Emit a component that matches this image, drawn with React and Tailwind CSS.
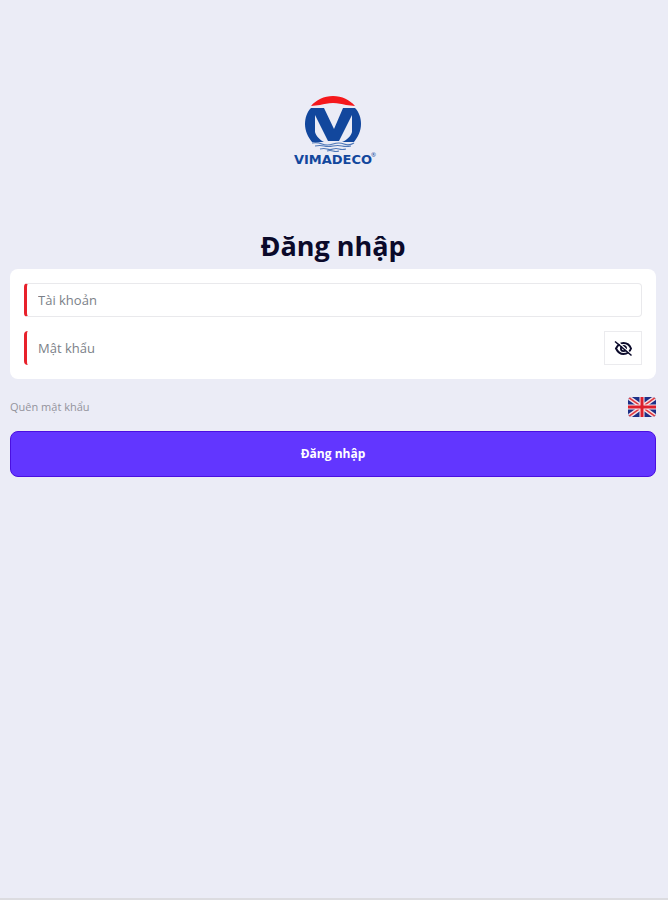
import React, { useState } from 'react';

function Logo() {
  return (
    <div className="relative flex flex-col items-center">
      <svg className="w-14 h-14" viewBox="0 0 56 56" aria-hidden="true">
        <path d="M6 10C11 4 19 0 28 0s17 4 22 10l-9-1C37 8 33 7 28 7s-9 1-13 2z" fill="#f5181c" />
        <path
          d="M6 12h13l10 21 9-21h12c4 4 6 10 6 16 0 7-3 13-7 18H37c5-2 9-6 10-10V19L34 45H23L10 19v17c1 4 5 8 9 10H7C3 41 0 35 0 28c0-6 2-12 6-16z"
          fill="#12479d"
        />
        <g fill="none" stroke="#4f78b8" strokeWidth="1.2">
          <path d="M7 47q5-1 10 1t11 0 11 0 10-1" />
          <path d="M10 50q5-1 9 0t9 0 9 0 9 0" />
          <path d="M15 53q4-1 7 0t6 0 6 0 7 0" />
          <path d="M22 55q3-1 6 0t6 0" />
        </g>
      </svg>
      <span className="mt-0.5 text-[13px] leading-3 font-bold text-[#12479d] font-['DejaVu_Sans',sans-serif]">VIMADECO</span>
      <span className="absolute -right-1 bottom-2 text-[6px] leading-none text-[#12479d]">®</span>
    </div>
  );
}

function EyeOff() {
  return (
    <svg className="w-5 h-5" viewBox="0 0 20 20" fill="none" stroke="#0b0a2a" aria-hidden="true">
      <path d="M3 10.500c2-4 4-5.500 7.500-5.500s6 1.500 7.500 5.500c-1.500 4-4 5.500-7.500 5.500S5 14.500 3 10.500z" strokeWidth="2" />
      <circle cx="10.500" cy="10.500" r="2.600" strokeWidth="1.800" />
      <path d="M3.500 2.500l15 14" stroke="#fff" strokeWidth="1.500" />
      <path d="M2 3.500l16.500 14" strokeWidth="1.600" />
    </svg>
  );
}

function UkFlag() {
  return (
    <svg className="w-7 h-5 rounded-sm" viewBox="0 0 28 20" aria-hidden="true">
      <rect width="28" height="20" fill="#1c2f86" />
      <path d="M0 0l28 20M28 0L0 20" stroke="#f3dfe6" strokeWidth="4.500" />
      <path d="M0 0l28 20M28 0L0 20" stroke="#e0393f" strokeWidth="1.500" />
      <path d="M14 0v20M0 10h28" stroke="#f6e6ea" strokeWidth="5" />
      <path d="M14 0v20M0 10h28" stroke="#dc1f2c" strokeWidth="3" />
    </svg>
  );
}

export default function App() {
  const [account, setAccount] = useState('');
  const [password, setPassword] = useState('');
  const [visible, setVisible] = useState(false);

  return (
    <main className="min-h-screen bg-[#ebecf6] border-b-2 border-[#dcdce0] pl-2.5 pr-3 pt-24 font-['Open_Sans','Noto_Sans',sans-serif]">
      <div className="flex justify-center">
        <Logo />
      </div>

      <h1 className="mt-15 text-center text-[27px] leading-10 font-bold text-[#0b0a2a]">Đăng nhập</h1>

      <form onSubmit={(e) => e.preventDefault()}>
        <div className="mt-[3px] rounded-lg bg-white px-3.5 py-3.5 flex flex-col gap-3.5">
          <input
            type="text"
            aria-label="Tài khoản"
            placeholder="Tài khoản"
            value={account}
            onChange={(e) => setAccount(e.target.value)}
            className="w-full h-[34px] rounded-sm border border-[#e9e9ec] border-l-3 border-l-[#e8212b] bg-white px-[11px] text-[13px] text-[#0b0a2a] placeholder:text-[#7b7f88] outline-none"
          />
          <div className="flex">
            <input
              type={visible ? 'text' : 'password'}
              aria-label="Mật khẩu"
              placeholder="Mật khẩu"
              value={password}
              onChange={(e) => setPassword(e.target.value)}
              className="flex-1 min-w-0 h-[34px] rounded-sm border-l-3 border-[#e8212b] bg-white px-[11px] text-[13px] text-[#0b0a2a] placeholder:text-[#7b7f88] outline-none"
            />
            <button
              type="button"
              aria-label="Hiện mật khẩu"
              onClick={() => setVisible(!visible)}
              className="w-[38px] h-[34px] border border-[#ebebee] flex items-center justify-center"
            >
              <EyeOff />
            </button>
          </div>
        </div>

        <div className="mt-[18px] flex items-center justify-between">
          <a href="#" className="text-[11px] text-[#93939c]">Quên mật khẩu</a>
          <button type="button" aria-label="English">
            <UkFlag />
          </button>
        </div>

        <button
          type="submit"
          className="mt-3.5 w-full h-[46px] rounded-lg border border-[#4a0fe0] bg-[#6236ff] text-xs font-bold text-white"
        >
          Đăng nhập
        </button>
      </form>
    </main>
  );
}
